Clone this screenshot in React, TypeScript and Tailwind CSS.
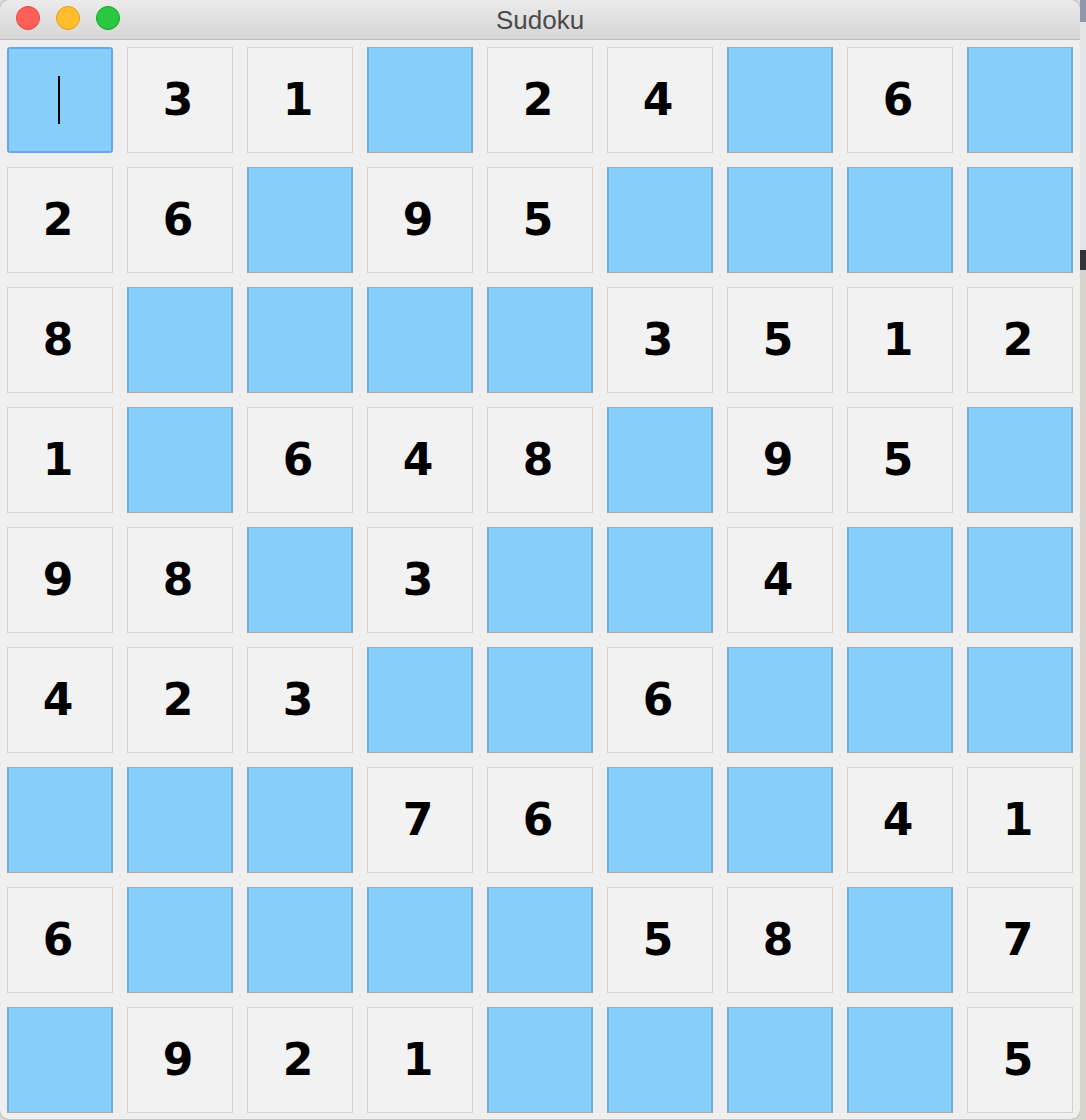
import React from "react";

const grid: (number | null)[][] = [
  [null, 3, 1, null, 2, 4, null, 6, null],
  [2, 6, null, 9, 5, null, null, null, null],
  [8, null, null, null, null, 3, 5, 1, 2],
  [1, null, 6, 4, 8, null, 9, 5, null],
  [9, 8, null, 3, null, null, 4, null, null],
  [4, 2, 3, null, null, 6, null, null, null],
  [null, null, null, 7, 6, null, null, 4, 1],
  [6, null, null, null, null, 5, 8, null, 7],
  [null, 9, 2, 1, null, null, null, null, 5],
];

function Cell({ value, focused }: { value: number | null; focused: boolean }) {
  if (value === null) {
    if (focused) {
      return (
        <div className="relative h-[106px] w-[106px] rounded-[3px] border-2 border-[#6aa6ee] bg-[#87cefa] flex items-center justify-center">
          <div className="mr-[2px] h-[48px] w-[2px] bg-black" />
        </div>
      );
    }
    return (
      <div className="h-[106px] w-[106px] border-y border-y-[#a9acae] border-x-2 border-x-[#6eaee0] bg-[#87cefa]" />
    );
  }
  return (
    <div
      className="h-[106px] w-[106px] border border-[#d2d2d2] bg-[#f2f2f2] flex items-center justify-center pr-[4px] text-[44px] font-bold text-black leading-none"
      style={{ fontFamily: '"DejaVu Sans", sans-serif' }}
    >
      {value}
    </div>
  );
}

export default function App() {
  return (
    <div className="flex h-[1120px] w-[1086px] overflow-hidden bg-[#d9d9d9]">
      <div className="flex h-[1119px] w-[1080px] shrink-0 flex-col overflow-hidden rounded-t-[10px] rounded-b-[9px] bg-[#efefef] shadow-[0_0_2px_rgba(0,0,0,0.35)]">
        <div className="relative flex h-[40px] shrink-0 items-center justify-center border-b border-[#b9b9b9] bg-gradient-to-b from-[#ebebeb] to-[#d6d6d6]">
          <div className="absolute left-[16px] top-[6px] flex gap-[16px]">
            <div className="h-[24px] w-[24px] rounded-full border border-[#e2463f] bg-[#fe5f57]" />
            <div className="h-[24px] w-[24px] rounded-full border border-[#e1a116] bg-[#febc2e]" />
            <div className="h-[24px] w-[24px] rounded-full border border-[#13a32a] bg-[#28c840]" />
          </div>
          <span
            className="text-[26px] leading-none text-[#4a4a4a]"
            style={{ fontFamily: '"Liberation Sans", Arial, sans-serif' }}
          >
            Sudoku
          </span>
        </div>
        <div className="grid grid-cols-[repeat(9,106px)] gap-[14px] pl-[7px] pt-[7px]">
          {grid.map((row, r) =>
            row.map((v, c) => (
              <Cell key={`${r}-${c}`} value={v} focused={r === 0 && c === 0} />
            ))
          )}
        </div>
      </div>
      <div className="flex w-[6px] flex-col">
        <div className="h-[22px] bg-[#8e97ab]" />
        <div className="h-[228px] bg-[#e4e4e4]" />
        <div className="h-[20px] bg-[#333333]" />
        <div className="flex-1 bg-[#d8d4cb]" />
      </div>
    </div>
  );
}
